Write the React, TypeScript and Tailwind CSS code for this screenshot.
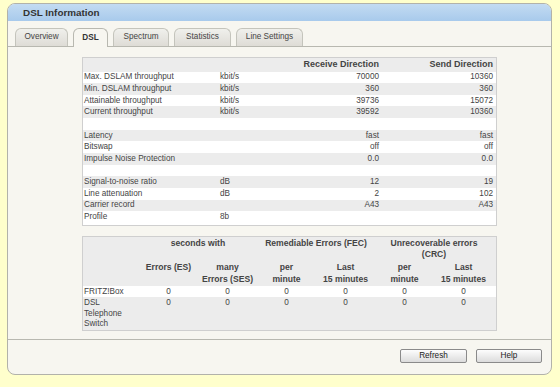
import React from "react";

const rows1: { label: string; unit: string; rx: string; tx: string }[] = [
  { label: "Max. DSLAM throughput", unit: "kbit/s", rx: "70000", tx: "10360" },
  { label: "Min. DSLAM throughput", unit: "kbit/s", rx: "360", tx: "360" },
  { label: "Attainable throughput", unit: "kbit/s", rx: "39736", tx: "15072" },
  { label: "Current throughput", unit: "kbit/s", rx: "39592", tx: "10360" },
  { label: "", unit: "", rx: "", tx: "" },
  { label: "Latency", unit: "", rx: "fast", tx: "fast" },
  { label: "Bitswap", unit: "", rx: "off", tx: "off" },
  { label: "Impulse Noise Protection", unit: "", rx: "0.0", tx: "0.0" },
  { label: "", unit: "", rx: "", tx: "" },
  { label: "Signal-to-noise ratio", unit: "dB", rx: "12", tx: "19" },
  { label: "Line attenuation", unit: "dB", rx: "2", tx: "102" },
  { label: "Carrier record", unit: "", rx: "A43", tx: "A43" },
  { label: "Profile", unit: "8b", rx: "", tx: "" },
];

const tabs = [
  { name: "Overview", w: "w-[53px]", active: false },
  { name: "DSL", w: "w-[35px]", active: true },
  { name: "Spectrum", w: "w-[56px]", active: false },
  { name: "Statistics", w: "w-[57px]", active: false },
  { name: "Line Settings", w: "w-[67px]", active: false },
];

export default function App() {
  return (
    <div
      className="min-h-[387px] bg-[#ffffcc] pl-[7px] pr-[8px] pt-[3px] pb-[11px] text-[#444]"
      style={{ fontFamily: '"Liberation Sans", Arial, sans-serif' }}
    >
      <div className="flex flex-col rounded-[8px] border border-[#b2b2aa] bg-[#f7f6f0] overflow-hidden">
        {/* header */}
        <div className="h-[17px] bg-gradient-to-b from-[#c3dbf2] to-[#a8caec] pl-[15px] flex items-center">
          <span className="text-[9.9px] font-bold text-[#333] leading-none">DSL Information</span>
        </div>
        {/* tabs */}
        <div className="pt-[7px] pl-[7px] flex gap-[5px] border-b border-[#b8b8b0]">
          {tabs.map((t) =>
            t.active ? (
              <div
                key={t.name}
                className={`${t.w} h-[19px] -mb-px rounded-t-[6px] border border-b-0 border-[#b8b8b0] bg-[#f7f6f0] flex items-center justify-center text-[8.2px] font-bold text-[#333]`}
              >
                {t.name}
              </div>
            ) : (
              <div
                key={t.name}
                className={`${t.w} h-[18px] rounded-t-[6px] border border-b-0 border-[#c4c4bc] bg-gradient-to-b from-[#f0f0ec] to-[#dedcd6] flex items-center justify-center text-[8.2px] text-[#444]`}
              >
                {t.name}
              </div>
            )
          )}
        </div>
        {/* content */}
        <div className="pl-[73.5px] pt-[10px] pb-[8px] flex flex-col gap-[10px]">
          {/* table 1 */}
          <div className="w-[415.5px] border border-[#cfcfcf] bg-white pb-[2px]">
            <div className="h-[13.5px] bg-[#ececec] flex items-center pl-[1.5px] pr-[3px] text-[9px] font-bold text-[#444]">
              <div className="w-[136px]" />
              <div className="w-[79px]" />
              <div className="w-[80px] text-right whitespace-nowrap">Receive Direction</div>
              <div className="w-[114px] text-right whitespace-nowrap">Send Direction</div>
            </div>
            {rows1.map((r, i) => (
              <div
                key={i}
                className={`h-[11.67px] flex items-center pl-[1.5px] pr-[3px] text-[8.2px] leading-none ${
                  i % 2 === 1 ? "bg-[#ececec]" : "bg-white"
                }`}
              >
                <div className="w-[136px] whitespace-nowrap">{r.label}</div>
                <div className="w-[79px]">{r.unit}</div>
                <div className="w-[80px] text-right">{r.rx}</div>
                <div className="w-[114px] text-right">{r.tx}</div>
              </div>
            ))}
          </div>
          {/* table 2 */}
          <div className="w-[415.5px] border border-[#cfcfcf] bg-[#ececec] text-[8.2px]">
            <div className="grid grid-cols-[56.5px_repeat(6,59px)] font-bold text-[8.6px] leading-[11.67px] text-[#444] text-center">
              <div className="h-[25px]" />
              <div className="col-span-2 pt-[0.5px]">seconds with</div>
              <div className="col-span-2 pt-[0.5px]">Remediable Errors (FEC)</div>
              <div className="col-span-2 pt-[0.5px] px-[8px]">Unrecoverable errors (CRC)</div>
              <div className="h-[23.5px]" />
              <div>Errors (ES)</div>
              <div>
                many
                <br />
                Errors (SES)
              </div>
              <div>
                per
                <br />
                minute
              </div>
              <div>
                Last
                <br />
                15 minutes
              </div>
              <div>
                per
                <br />
                minute
              </div>
              <div>
                Last
                <br />
                15 minutes
              </div>
            </div>
            <div className="grid grid-cols-[56.5px_repeat(6,59px)] bg-white leading-[11.67px] text-center">
              <div className="text-left pl-[1.5px]">FRITZ!Box</div>
              <div>0</div>
              <div>0</div>
              <div>0</div>
              <div>0</div>
              <div>0</div>
              <div>0</div>
            </div>
            <div className="grid grid-cols-[56.5px_repeat(6,59px)] h-[32.5px] leading-[11.67px] text-center">
              <div className="text-left pl-[1.5px] pt-[1px] leading-[10.5px]">
                DSL
                <br />
                Telephone
                <br />
                Switch
              </div>
              <div>0</div>
              <div>0</div>
              <div>0</div>
              <div>0</div>
              <div>0</div>
              <div>0</div>
            </div>
          </div>
        </div>
        {/* footer */}
        <div className="border-t border-[#b8b8b0] pt-[9px] pb-[11px] pr-[9px] flex justify-end gap-[9px]">
          <button className="w-[67px] h-[14px] rounded-[2px] border border-[#8a8a8a] bg-gradient-to-b from-[#fdfdfd] to-[#dcdcdc] text-[8.2px] text-[#222] leading-none">
            Refresh
          </button>
          <button className="w-[66px] h-[14px] rounded-[2px] border border-[#8a8a8a] bg-gradient-to-b from-[#fdfdfd] to-[#dcdcdc] text-[8.2px] text-[#222] leading-none">
            Help
          </button>
        </div>
      </div>
    </div>
  );
}
